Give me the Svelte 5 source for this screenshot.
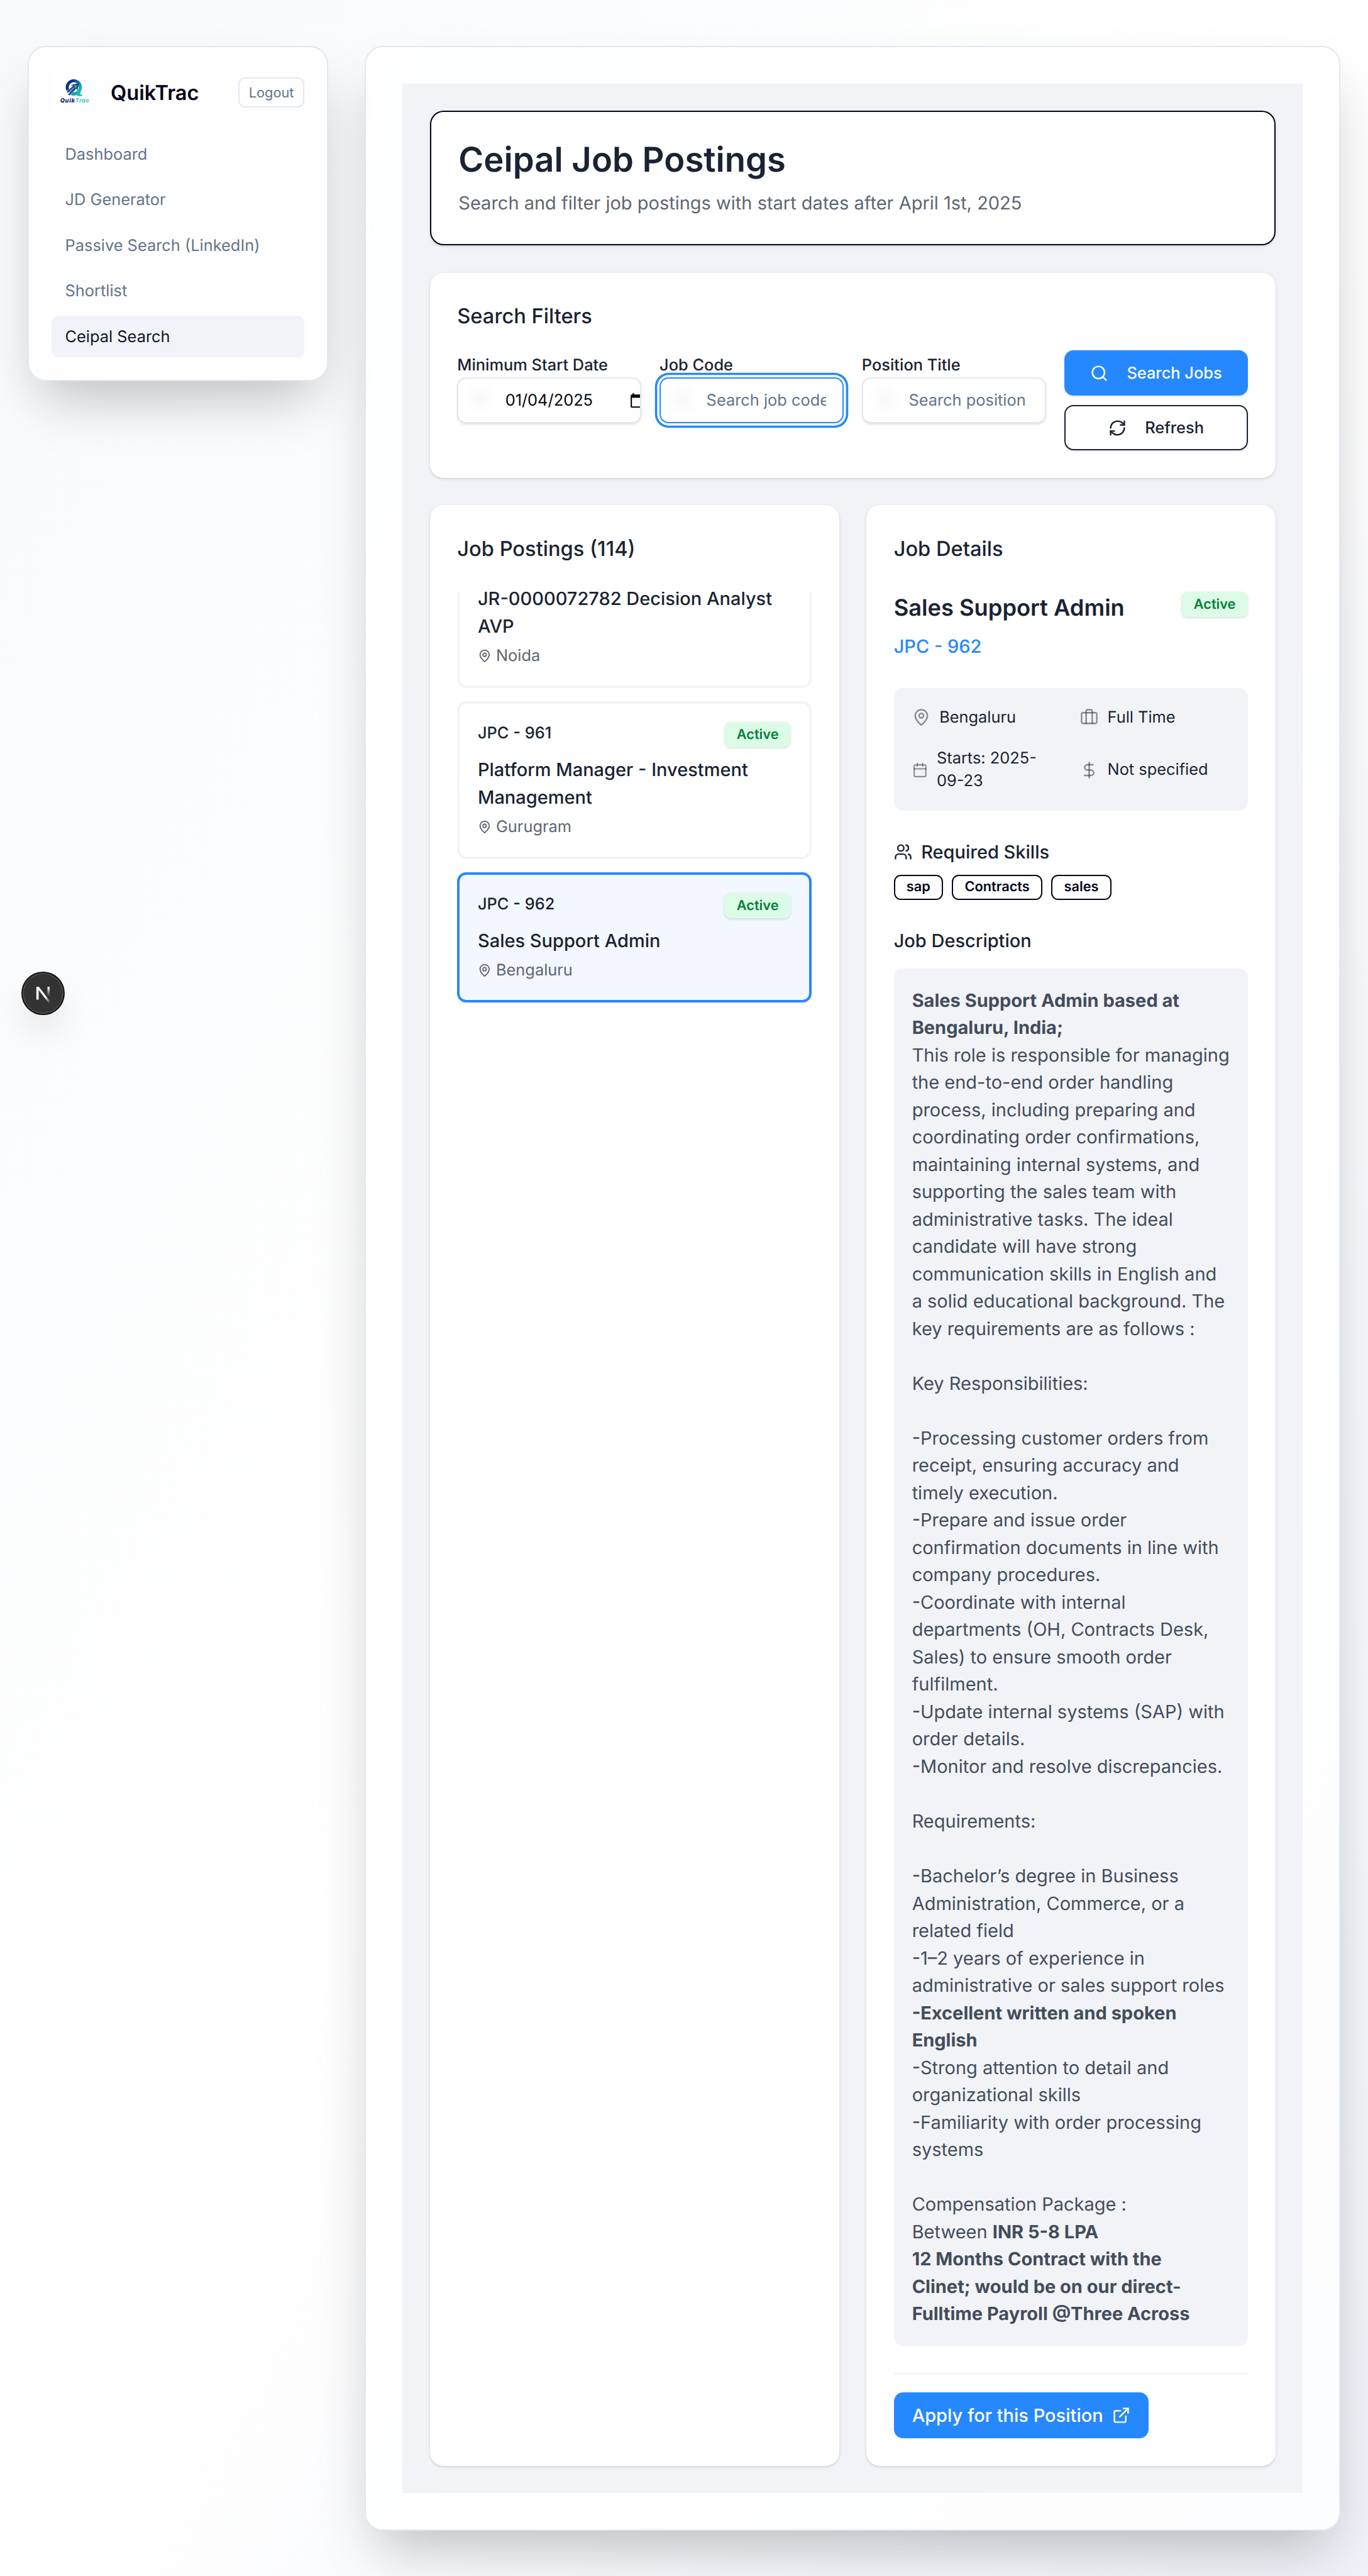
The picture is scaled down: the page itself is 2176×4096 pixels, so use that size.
<script>
  const nav = ['Dashboard', 'JD Generator', 'Passive Search (LinkedIn)', 'Shortlist', 'Ceipal Search'];
  const activeNav = 'Ceipal Search';

  const jobs = [
    { code: 'JPC - 960', title: 'JR-0000072782 Decision Analyst AVP', place: 'Noida' },
    { code: 'JPC - 961', title: 'Platform Manager - Investment Management', place: 'Gurugram' },
    { code: 'JPC - 962', title: 'Sales Support Admin', place: 'Bengaluru' }
  ];
  let selected = $state('JPC - 962');

  const skills = ['sap', 'Contracts', 'sales'];

  // Each entry is one paragraph line; runs marked b are bold.
  const description = [
    [{ b: 'Sales Support Admin based at Bengaluru, India;' }],
    [{ t: 'This role is responsible for managing the end-to-end order handling process, including preparing and coordinating order confirmations, maintaining internal systems, and supporting the sales team with administrative tasks. The ideal candidate will have strong communication skills in English and a solid educational background. The key requirements are as follows :' }],
    [],
    [{ t: 'Key Responsibilities:' }],
    [],
    [{ t: '-Processing customer orders from receipt, ensuring accuracy and timely execution.' }],
    [{ t: '-Prepare and issue order confirmation documents in line with company procedures.' }],
    [{ t: '-Coordinate with internal departments (OH, Contracts Desk, Sales) to ensure smooth order fulfilment.' }],
    [{ t: '-Update internal systems (SAP) with order details.' }],
    [{ t: '-Monitor and resolve discrepancies.' }],
    [],
    [{ t: 'Requirements:' }],
    [],
    [{ t: '-Bachelor’s degree in Business Administration, Commerce, or a related field' }],
    [{ t: '-1–2 years of experience in administrative or sales support roles' }],
    [{ b: '-Excellent written and spoken English' }],
    [{ t: '-Strong attention to detail and organizational skills' }],
    [{ t: '-Familiarity with order processing systems' }],
    [],
    [{ t: 'Compensation Package :' }],
    [{ t: 'Between ' }, { b: 'INR 5-8 LPA' }],
    [{ b: '12 Months Contract with the Clinet;\u00a0would be on our direct-Fulltime Payroll @Three Across' }]
  ];
</script>

{#snippet pin()}
  <path d="M20 10c0 4.993-5.539 10.193-7.399 11.799a1 1 0 0 1-1.202 0C9.539 20.193 4 14.993 4 10a8 8 0 0 1 16 0" />
  <circle cx="12" cy="10" r="3" />
{/snippet}

<div class="page">
  <aside class="sidebar">
    <div class="brand">
      <div class="logo">
        <svg viewBox="0 0 40 40">
          <defs>
            <linearGradient id="q" gradientUnits="userSpaceOnUse" x1="13" y1="10" x2="27" y2="20">
              <stop offset="0.250" stop-color="#0d3283" />
              <stop offset="0.700" stop-color="#12a3ae" />
              <stop offset="1" stop-color="#1fd0b8" />
            </linearGradient>
          </defs>
          <path d="M14.300 17.800A5.750 5.750 0 1 1 18.200 20.950" fill="none" stroke="url(#q)" stroke-width="2.700" />
          <path d="M17.200 21.200c2.500.2 4-.6 5.600-2.200l3 1.400-.8 1.300 2 .2v1.300h-4.200l-.6-1.200c-1.700.6-3.400.7-5 .3z" fill="url(#q)" />
          <path d="M13.100 19.300l5.700-5.100-1.800-1 7.200-1.600-1.500 6.400-1.100-1.500-5.600 6-1.100-.6-.8.200 3.800-4.300-2.700 2.400z" fill="#1c4f90" />
          <path d="M14.300 21l5-5.200" stroke="#fff" stroke-width=".5" />
          <circle cx="21" cy="14.600" r="1.300" fill="#5486ab" />
        </svg>
        <span class="wordmark"><b>Quik</b><i>Trac</i></span>
      </div>
      <span class="name">QuikTrac</span>
      <button class="logout">Logout</button>
    </div>
    <nav>
      {#each nav as item}
        <a class:active={item === activeNav}>{item}</a>
      {/each}
    </nav>
  </aside>

  <main>
    <div class="content">
      <header class="hero">
        <h1>Ceipal Job Postings</h1>
        <p>Search and filter job postings with start dates after April 1st, 2025</p>
      </header>

      <section class="card">
        <h2>Search Filters</h2>
        <div class="filters">
          <div class="field">
            <div class="label"><span>Minimum Start Date</span></div>
            <div class="input date">
              <span class="value">01/04/2025</span>
              <svg class="cal" viewBox="0 0 24 24"><path d="M20 3h-1V1h-2v2H7V1H5v2H4c-1.100 0-2 .9-2 2v16c0 1.100.9 2 2 2h16c1.100 0 2-.9 2-2V5c0-1.100-.9-2-2-2zm0 18H4V8h16v13z" /></svg>
            </div>
          </div>
          <div class="field">
            <div class="label"><span>Job Code</span></div>
            <div class="input focus"><span class="clip">Search job code...</span></div>
          </div>
          <div class="field">
            <div class="label"><span>Position Title</span></div>
            <div class="input"><span class="clip">Search position title...</span></div>
          </div>
          <div class="buttons">
            <button class="btn primary">
              <svg class="icon" viewBox="0 0 24 24"><circle cx="11" cy="11" r="8" /><path d="m21 21-4.300-4.300" /></svg>
              Search Jobs
            </button>
            <button class="btn outline">
              <svg class="icon" viewBox="0 0 24 24">
                <path d="M3 12a9 9 0 0 1 9-9 9.750 9.750 0 0 1 6.740 2.740L21 8" /><path d="M21 3v5h-5" />
                <path d="M21 12a9 9 0 0 1-9 9 9.750 9.750 0 0 1-6.740-2.740L3 16" /><path d="M8 16H3v5" />
              </svg>
              Refresh
            </button>
          </div>
        </div>
      </section>

      <div class="columns">
        <section class="card">
          <h2>Job Postings (114)</h2>
          <div class="list">
            {#each jobs as job}
              <article class="job" class:selected={job.code === selected}>
                <div class="row">
                  <span class="code">{job.code}</span>
                  <span class="status">Active</span>
                </div>
                <h3>{job.title}</h3>
                <div class="place"><svg class="icon" viewBox="0 0 24 24">{@render pin()}</svg>{job.place}</div>
              </article>
            {/each}
          </div>
        </section>

        <section class="card">
          <h2>Job Details</h2>
          <div class="details">
            <div>
              <div class="row">
                <h4>Sales Support Admin</h4>
                <span class="status">Active</span>
              </div>
              <p class="ref">JPC - 962</p>
            </div>

            <div class="facts">
              <div class="fact"><svg class="icon" viewBox="0 0 24 24">{@render pin()}</svg><span>Bengaluru</span></div>
              <div class="fact">
                <svg class="icon" viewBox="0 0 24 24"><path d="M16 20V4a2 2 0 0 0-2-2h-4a2 2 0 0 0-2 2v16" /><rect x="2" y="6" width="20" height="14" rx="2" /></svg>
                <span>Full Time</span>
              </div>
              <div class="fact">
                <svg class="icon" viewBox="0 0 24 24"><path d="M8 2v4" /><path d="M16 2v4" /><rect x="3" y="4" width="18" height="18" rx="2" /><path d="M3 10h18" /></svg>
                <span>Starts: 2025-09-23</span>
              </div>
              <div class="fact">
                <svg class="icon" viewBox="0 0 24 24"><path d="M12 2v20" /><path d="M17 5H9.500a3.500 3.500 0 0 0 0 7h5a3.500 3.500 0 0 1 0 7H6" /></svg>
                <span>Not specified</span>
              </div>
            </div>

            <div>
              <h5>
                <svg class="icon" viewBox="0 0 24 24"><path d="M16 21v-2a4 4 0 0 0-4-4H6a4 4 0 0 0-4 4v2" /><circle cx="9" cy="7" r="4" /><path d="M22 21v-2a4 4 0 0 0-3-3.870" /><path d="M16 3.130a4 4 0 0 1 0 7.750" /></svg>
                Required Skills
              </h5>
              <div class="chips">{#each skills as skill}<span class="chip">{skill}</span>{/each}</div>
            </div>

            <div>
              <h5>Job Description</h5>
              <div class="description">
                {#each description as line}
                  <div class="line">{#each line as run}{#if run.b}<strong>{run.b}</strong>{:else}{run.t}{/if}{/each}</div>
                {/each}
              </div>
            </div>

            <div class="apply">
              <button>
                Apply for this Position
                <svg class="icon" viewBox="0 0 24 24"><path d="M15 3h6v6" /><path d="M10 14 21 3" /><path d="M18 13v6a2 2 0 0 1-2 2H5a2 2 0 0 1-2-2V8a2 2 0 0 1 2-2h6" /></svg>
              </button>
            </div>
          </div>
        </section>
      </div>
    </div>
  </main>

  <div class="devtools">
    <svg viewBox="0 0 38 38">
      <defs>
        <linearGradient id="diag" gradientUnits="userSpaceOnUse" x1="20.500" y1="22" x2="24.500" y2="27.500"><stop stop-color="#fff" /><stop offset="1" stop-color="#fff" stop-opacity="0" /></linearGradient>
        <linearGradient id="stem" gradientUnits="userSpaceOnUse" x1="0" y1="13.500" x2="0" y2="21.500"><stop stop-color="#fff" /><stop offset="1" stop-color="#fff" stop-opacity="0" /></linearGradient>
      </defs>
      <path d="M12.600 13.300h2.200l10.200 13.300-1.500 1.100-8.900-11.700v8.500h-2z" fill="url(#diag)" />
      <path d="M22.300 13.300h2v8.200h-2z" fill="url(#stem)" />
    </svg>
  </div>
</div>

<style>
  :global(body) { margin: 0; }
  * { box-sizing: border-box; }
  h1, h2, h3, h4, h5, p { margin: 0; }
  button { font: inherit; margin: 0; cursor: pointer; }

  .page {
    --blue: #2688ff;
    --ink: #1a2332;
    --muted: #5f6673;
    --panel: #f2f3f7;
    --black: #020617;
    --hair: 1.110px;
    zoom: 1.81333;
    position: relative;
    display: flex;
    align-items: flex-start;
    gap: 32px;
    width: 1200px;
    height: 2259px;
    padding: 40px 24px;
    overflow: hidden;
    font: 400 16px/24px Inter, "Liberation Sans", sans-serif;
    text-rendering: geometricPrecision;
    color: var(--black);
    background: linear-gradient(to bottom right, #f8fafc, #fff 50%, #eff2f8);
  }
  .icon {
    width: 16px;
    height: 16px;
    fill: none;
    stroke: currentColor;
    stroke-width: 2;
    stroke-linecap: round;
    stroke-linejoin: round;
  }

  .sidebar, main {
    background: rgba(255, 255, 255, .8);
    border: var(--hair) solid #e2e8f0;
    border-radius: 16px;
    box-shadow: 0 25px 50px -12px rgba(0, 0, 0, .25);
  }
  .sidebar { width: 264px; flex: none; padding: 20px; position: relative; background: rgba(254, 254, 254, .98); }
  .brand { display: flex; align-items: center; height: 40px; margin-bottom: 16px; }
  .logo { position: relative; width: 40px; height: 40px; background: #fff; }
  .logo svg { display: block; width: 40px; height: 40px; }
  .wordmark {
    position: absolute;
    left: 7.700px;
    top: 24.700px;
    display: flex;
    font-size: 5.200px;
    line-height: 6px;
    font-weight: 800;
    font-style: italic;
    letter-spacing: .320px;
  }
  .wordmark b { color: #12297e; font-weight: 800; }
  .wordmark i { color: #2fc6c4; font-weight: 700; }
  .name { margin-left: 12px; font-size: 18px; font-weight: 600; line-height: 28px; }
  .logout {
    margin-left: auto;
    padding: 4px 8px;
    border: var(--hair) solid #e2e8f0;
    border-radius: 6px;
    background: none;
    color: #64748b;
    font-size: 12px;
    line-height: 16px;
  }
  nav { display: flex; flex-direction: column; gap: 4px; }
  nav a { padding: 8.500px 12px 7.500px; border-radius: 6px; font-size: 14px; line-height: 20px; color: #64748b; }
  nav a.active { background: #f1f3f9; color: #0f172a; }

  main { flex: 1; height: 2179px; padding: 32px; }
  .content { display: flex; flex-direction: column; gap: 24px; height: 100%; padding: 24px; background: var(--panel); }
  .hero {
    height: 118px;
    padding: 24px;
    border: var(--hair) solid var(--black);
    border-radius: 12px;
    background: #fff;
    box-shadow: 0 1px 3px rgba(0, 0, 0, .1), 0 1px 2px -1px rgba(0, 0, 0, .1);
  }
  h1 { margin-bottom: 8px; font-size: 30px; line-height: 36px; font-weight: 600; color: var(--ink); }
  .hero p { color: var(--muted); }

  .card { padding: 24px; border-radius: 12px; background: #fff; box-shadow: 0 1px 3px rgba(0, 0, 0, .1), 0 1px 2px -1px rgba(0, 0, 0, .1); }
  h2 { font-size: 18px; line-height: 28px; font-weight: 500; color: var(--ink); }

  .filters { display: grid; grid-template-columns: repeat(4, minmax(0, 1fr)); gap: 16px; margin-top: 16px; }
  .label { height: 24px; color: var(--ink); }
  .label span { font-size: 14px; font-weight: 500; }
  .input {
    display: flex;
    align-items: center;
    height: 40px;
    padding: 0 14px 0 40px;
    border: var(--hair) solid #e5e7eb;
    border-radius: 8px;
    overflow: hidden;
    font-size: 14px;
    color: #64748b;
    background: radial-gradient(circle at 19px 18px, rgba(0, 0, 0, .022), transparent 16px) #fff;
    box-shadow: 0 1px 2px rgba(0, 0, 0, .12);
  }
  .clip { flex: 1; overflow: hidden; white-space: nowrap; }
  .date { color: var(--black); padding-left: 41px; }
  .value { flex: none; width: 109px; }
  .cal { flex: none; width: 14px; height: 14px; }
  .focus { border-color: var(--blue); box-shadow: 0 0 0 2px #fff, 0 0 0 4px var(--blue); }
  .buttons { display: flex; flex-direction: column; gap: 8px; }
  .btn {
    display: flex;
    align-items: center;
    justify-content: center;
    gap: 16px;
    height: 40px;
    padding: 0;
    border: 0;
    border-radius: 8px;
    font-size: 14px;
    font-weight: 500;
    box-shadow: 0 1px 2px rgba(0, 0, 0, .1);
  }
  .primary { background: var(--blue); color: #fff; }
  .outline { background: #fff; color: var(--ink); border: var(--hair) solid var(--ink); }

  .columns { display: grid; grid-template-columns: 1fr 1fr; gap: 24px; height: 1719px; }
  .list { margin-top: 24px; height: 1619px; overflow: hidden; }
  .job { padding: 15.800px; border: 2.210px solid #f3f4f6; border-radius: 8px; margin-bottom: 12px; background: #fff; }
  /* The list is scrolled so that its first visible card is cut by the top edge. */
  .job:first-child { margin-top: -54px; }
  .job:first-child .row { visibility: hidden; }
  .job.selected { border-color: var(--blue); background: #f3f7ff; }
  .row { display: flex; justify-content: space-between; align-items: flex-start; }
  .code { font-size: 14px; line-height: 20px; font-weight: 500; color: var(--ink); }
  .status {
    height: 22px;
    padding: 3.400px 11px 2.600px;
    border-radius: 6px;
    font-size: 12px;
    line-height: 16px;
    font-weight: 600;
    color: #008236;
    background: #dcfce7;
    box-shadow: 0 1px 2px rgba(0, 0, 0, .12);
  }
  h3 { margin: 8px 0 4px; font-size: 16px; font-weight: 500; line-height: 24px; color: var(--ink); }
  .place { display: flex; align-items: center; gap: 4px; font-size: 14px; line-height: 20px; color: var(--muted); }
  .place .icon { width: 12px; height: 12px; }

  .details { display: flex; flex-direction: column; gap: 24px; margin-top: 24px; }
  h4 { margin: 0; font-size: 20px; line-height: 28px; font-weight: 600; color: var(--ink); }
  .details > div > .row { height: 28px; }
  .ref { margin-top: 8px; font-weight: 500; color: var(--blue); }
  .facts { display: grid; grid-template-columns: repeat(2, minmax(0, 1fr)); gap: 16px; padding: 16px; border-radius: 8px; background: var(--panel); }
  .fact { display: flex; align-items: center; gap: 8px; font-size: 14px; line-height: 20px; color: var(--ink); }
  .fact .icon { stroke-opacity: .5; }
  h5 { display: flex; align-items: center; gap: 8px; font-size: 16px; line-height: 24px; font-weight: 500; color: var(--ink); }
  .chips { display: flex; gap: 8px; margin-top: 8px; }
  .chip { height: 22px; padding: 2px 10px; border: var(--hair) solid var(--black); border-radius: 6px; font-size: 12px; line-height: 16px; font-weight: 600; }
  .description { margin-top: 12px; padding: 16px; border-radius: 8px; background: var(--panel); color: #434d5c; }
  .line { min-height: 24px; }
  .line strong { font-weight: 700; }
  .apply { padding-top: 16px; border-top: var(--hair) solid #f3f4f6; }
  .apply button {
    display: flex;
    align-items: center;
    gap: 8px;
    height: 40px;
    padding: 0 16px;
    border: 0;
    border-radius: 8px;
    background: var(--blue);
    color: #fff;
    font-weight: 500;
  }

  .devtools {
    position: absolute;
    left: 19px;
    top: 852px;
    width: 38px;
    height: 38px;
    border-radius: 50%;
    background: #333;
    border: 1.110px solid #111;
    box-shadow: inset 0 0 0 1px #4d4d4d, 0 16px 32px -8px rgba(0, 0, 0, .24);
  }
  .devtools svg { display: block; margin: -1px; width: 38px; height: 38px; }
</style>
